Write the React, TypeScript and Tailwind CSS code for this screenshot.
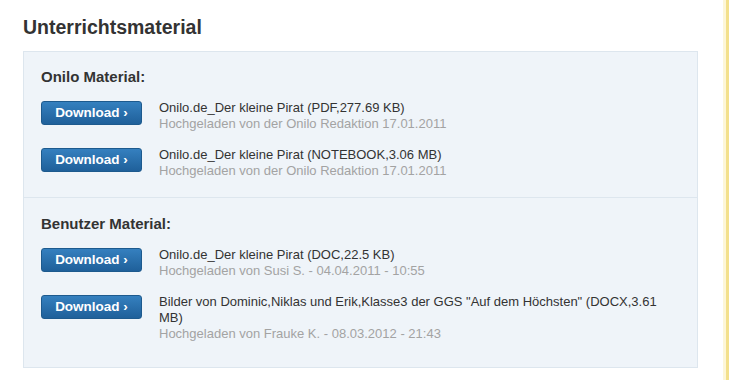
import React from "react";

type Item = { title: string; meta: string };

const onilo: Item[] = [
  { title: "Onilo.de_Der kleine Pirat (PDF,277.69 KB)", meta: "Hochgeladen von der Onilo Redaktion 17.01.2011" },
  { title: "Onilo.de_Der kleine Pirat (NOTEBOOK,3.06 MB)", meta: "Hochgeladen von der Onilo Redaktion 17.01.2011" },
];

const benutzer: Item[] = [
  { title: "Onilo.de_Der kleine Pirat (DOC,22.5 KB)", meta: "Hochgeladen von Susi S. - 04.04.2011 - 10:55" },
  {
    title: 'Bilder von Dominic,Niklas und Erik,Klasse3 der GGS "Auf dem Höchsten" (DOCX,3.61 MB)',
    meta: "Hochgeladen von Frauke K. - 08.03.2012 - 21:43",
  },
];

function Row({ item }: { item: Item }) {
  return (
    <div className="flex items-start gap-[17px]">
      <button className="mt-px flex h-[24px] w-[101px] shrink-0 items-center justify-center rounded-[3px] border border-[#1d5a8e] bg-gradient-to-b from-[#3580bf] to-[#1f609a] text-[13.5px] font-bold text-white">
        Download ›
      </button>
      <div className="pr-4 text-[13px] leading-[16px]">
        <div className="text-[#333333]">{item.title}</div>
        <div className="text-[#a3a3a3]">{item.meta}</div>
      </div>
    </div>
  );
}

function Section({ title, items, last }: { title: string; items: Item[]; last?: boolean }) {
  return (
    <div className={`px-[17px] ${last ? "pt-[16px] pb-[25px]" : "pt-[15px] pb-[18px] border-b border-[#dde6ee]"}`}>
      <div className="text-[15px] font-bold leading-[20px] text-[#333333]">{title}</div>
      <div className="mt-[13px] flex flex-col gap-[15px]">
        {items.map((it, i) => (
          <Row key={i} item={it} />
        ))}
      </div>
    </div>
  );
}

export default function App() {
  return (
    <div
      className="h-[380px] w-[729px] bg-white"
      style={{ fontFamily: '"Liberation Sans", Arial, sans-serif' }}
    >
      <div className="flex h-full">
        <div className="w-[723px] pl-[23px] pr-[25px] pt-[14px]">
          <h2 className="text-[19.5px] font-bold leading-[26px] text-[#333333]">Unterrichtsmaterial</h2>
          <div className="mt-[11px] border border-[#dde6ee] bg-[#eff4f9]">
            <Section title="Onilo Material:" items={onilo} />
            <Section title="Benutzer Material:" items={benutzer} last />
          </div>
        </div>
        <div className="w-[3px] bg-[#fdf6d8]" />
        <div className="w-[3px] bg-[#f3e08c]" />
      </div>
    </div>
  );
}
